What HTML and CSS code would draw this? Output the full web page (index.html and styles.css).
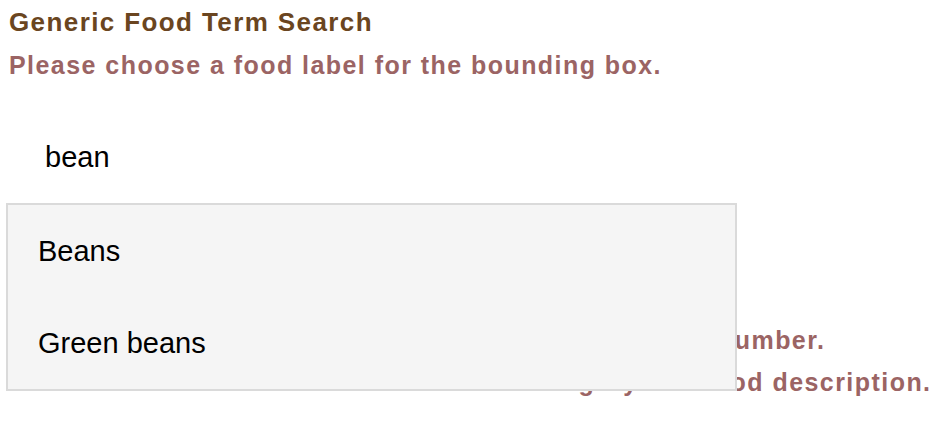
FILE: index.html
```html
<!DOCTYPE html>
<html lang="en">
<head>
    <meta charset="UTF-8">
    <meta name="viewport" content="width=device-width, initial-scale=1.0">
    <title>Generic Food Term Search</title>
    <link rel="stylesheet" href="styles.css">
</head>
<body>
    <div class="page">
        <h1 class="title">Generic Food Term Search</h1>
        <div class="hint">Please choose a food label for the bounding box.</div>

        <div class="search">
            <input class="search-input" type="text" value="bean">
            <ul class="suggestions">
                <li>Beans</li>
                <li>Green beans</li>
            </ul>
        </div>

        <div class="notes">
            <div class="hint">Please enter a quantity for the food items as a whole number.</div>
            <div class="hint">Please select the closest match to the category and food description.</div>
        </div>
    </div>
</body>
</html>
```

FILE: styles.css
```css
body {
    font-family: "Liberation Sans", Arial, sans-serif;
    background-color: #fff;
    color: #000;
    margin: 0;
    padding: 0;
}
.page {
    padding: 0 9px;
}
.title {
    margin: 7px 0 0;
    font-size: 26px;
    line-height: 30px;
    letter-spacing: 1.4px;
    color: #6a4520;
}
.hint {
    font-size: 25px;
    font-weight: bold;
    line-height: 30px;
    letter-spacing: 1.45px;
    color: #9b6464;
    white-space: nowrap;
}
.title + .hint {
    margin-top: 13px;
}
.search {
    position: relative;
    margin-top: 49px;
}
.search-input {
    display: block;
    width: 700px;
    height: 56px;
    padding: 0 0 0 36px;
    margin: 0;
    border: none;
    outline: none;
    background: transparent;
    font-family: inherit;
    font-size: 29px;
    color: #000;
}
.suggestions {
    position: absolute;
    top: 74px;
    left: -3px;
    width: 727px;
    margin: 0;
    padding: 0;
    list-style: none;
    background-color: #f5f5f5;
    border: 2px solid #dadada;
    z-index: 1;
}
.suggestions li {
    height: 92px;
    line-height: 92px;
    padding-left: 30px;
    font-size: 29px;
    color: #000;
}
.notes {
    margin-top: 134px;
}
.notes .hint {
    line-height: 42px;
}
```
